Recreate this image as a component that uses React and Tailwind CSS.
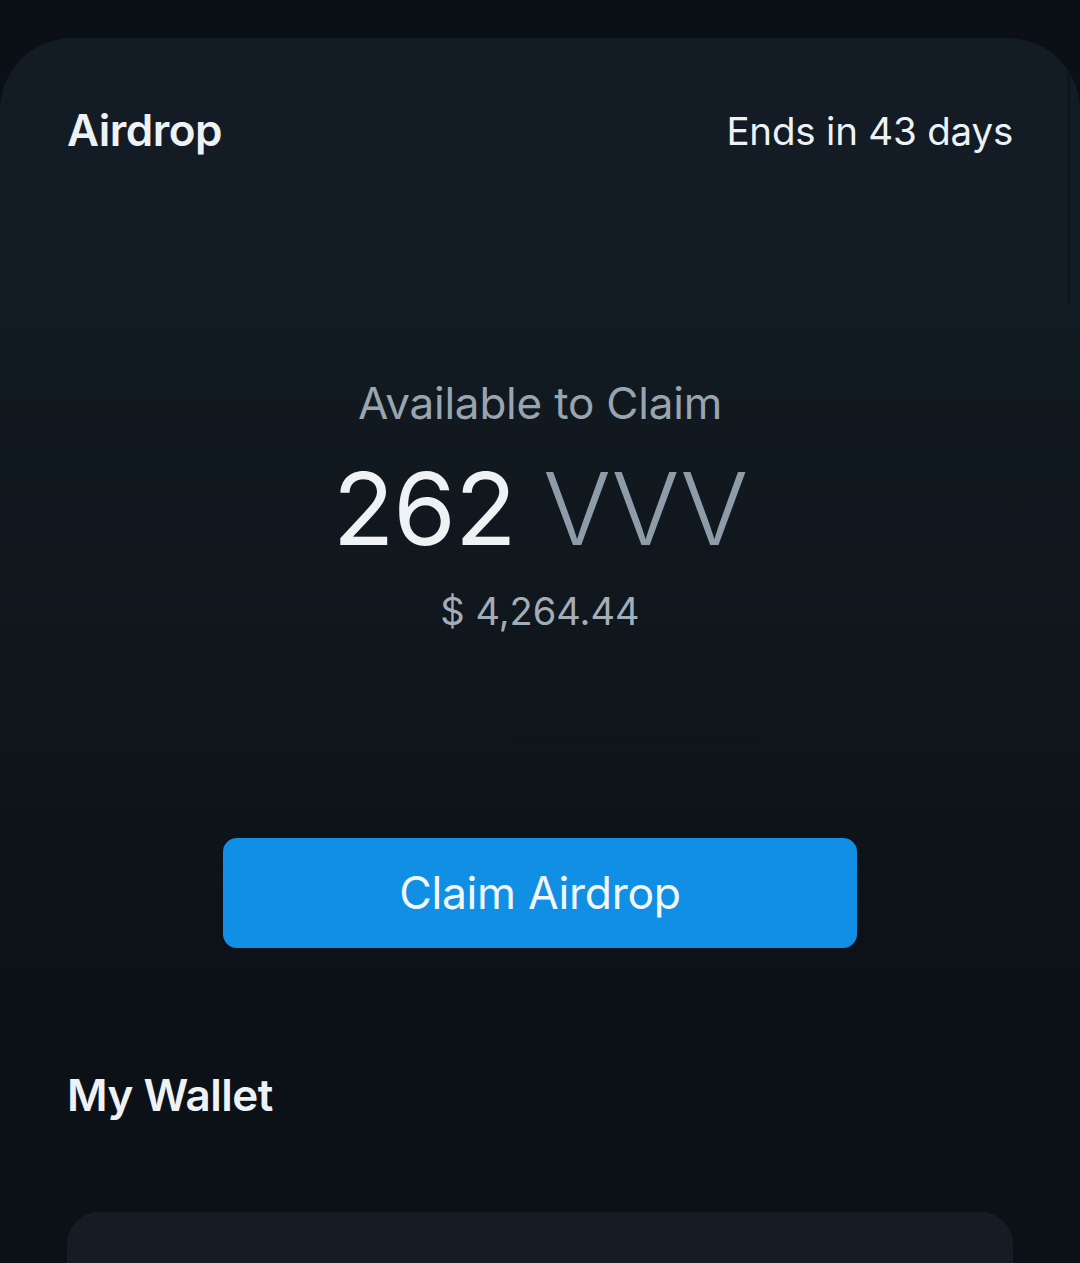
export default function App() {
  return (
    <div
      className="w-[1080px] h-[1263px] overflow-hidden bg-[#0a1015] pt-[38px]"
      style={{ fontFamily: 'Inter, "Noto Sans", sans-serif' }}
    >
      {/* Airdrop card */}
      <div className="relative rounded-t-[72px] bg-[#131c24]">
        <div className="absolute right-[10px] top-[32px] h-[235px] w-[3px] rounded-full bg-[#0e161c]" />
        <div className="flex h-[290px] items-start justify-between px-[67px] pt-[59px]">
          <h1 className="text-[44px] font-semibold tracking-[-0.5px] text-[#eef2f5]">Airdrop</h1>
          <span className="pt-[6px] text-[38.5px] tracking-[-0.2px] text-[#eef2f5]">Ends in 43 days</span>
        </div>

        <div className="flex h-[672px] flex-col items-center bg-gradient-to-b from-[#121a21] via-[#0f161c] to-[#0b1116] pt-[42px]">
          <p className="text-[44px] tracking-[-0.2px] text-[#98a5b0]">Available to Claim</p>
          <p className="mt-[17px] text-[101px] leading-[1.1] tracking-[-1px]">
            <span className="text-[#eef2f5]">262</span>{' '}
            <span className="font-light text-[#8d9ca8]">VVV</span>
          </p>
          <p className="mt-[19px] text-[38px] text-[#a2adb7]">$ 4,264.44</p>

          <button className="mt-[198px] h-[110px] w-[634px] rounded-[14px] bg-[#118fe5] text-[44.5px] tracking-[-0.3px] text-[#f2f7fb]">
            Claim Airdrop
          </button>
        </div>
      </div>

      {/* Wallet */}
      <div className="bg-[#0b1116] px-[67px]">
        <h2 className="pt-[62px] text-[44px] font-semibold tracking-[-0.5px] text-[#eef2f5]">My Wallet</h2>
        <div className="mt-[84px] h-[200px] rounded-[32px] bg-[#151c24]" />
      </div>
    </div>
  );
}
